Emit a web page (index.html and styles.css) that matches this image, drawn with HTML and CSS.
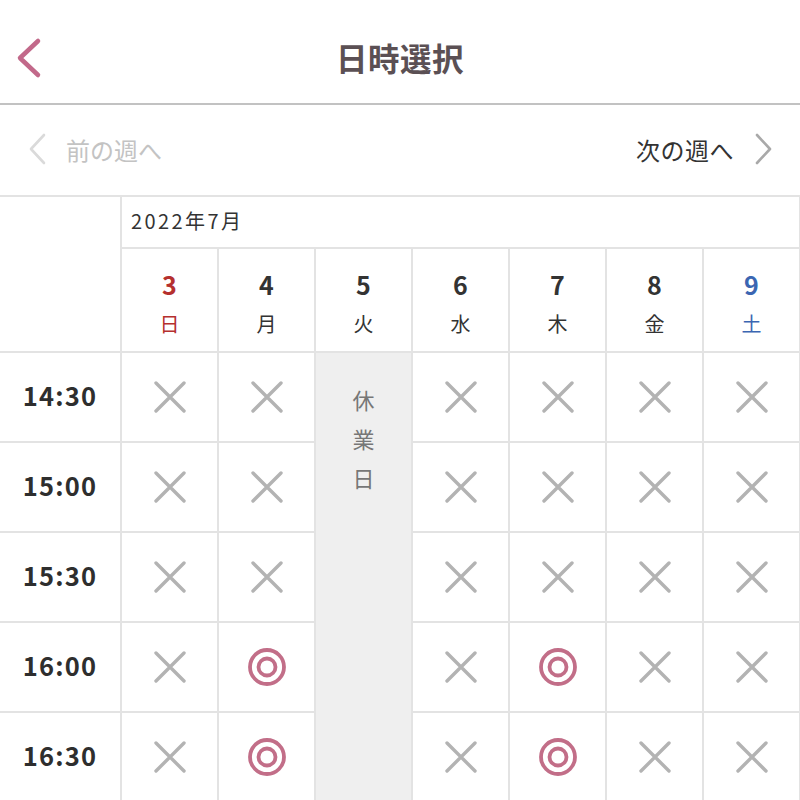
FILE: index.html
```html
<!DOCTYPE html>
<html lang="ja">
<head>
<meta charset="utf-8">
<title>日時選択</title>
<link rel="stylesheet" href="styles.css">
</head>
<body>
<header class="topbar">
  <div class="back">
    <svg width="28" height="42" viewBox="0 0 28 42"><polyline points="23,4 5,21 23,38" fill="none" stroke="#c2698a" stroke-width="4.5" stroke-linecap="round" stroke-linejoin="round"/></svg>
  </div>
  <h1 class="title">日時選択</h1>
  <div></div>
</header>
<nav class="weeknav">
  <div class="prev">
    <svg width="20" height="32" viewBox="0 0 20 32"><polyline points="17,2 4,16 17,30" fill="none" stroke="#dadada" stroke-width="2.6" stroke-linecap="round" stroke-linejoin="round"/></svg>
    <span>前の週へ</span>
  </div>
  <div class="next">
    <span>次の週へ</span>
    <svg width="20" height="32" viewBox="0 0 20 32"><polyline points="3,2 16,16 3,30" fill="none" stroke="#a9a9a9" stroke-width="2.6" stroke-linecap="round" stroke-linejoin="round"/></svg>
  </div>
</nav>
<div class="cal">
  <div class="corner"></div>
  <div class="month">2022年7月</div>
  <div class="holiday"><span>休業日</span></div>

  <div class="day sun"><b>3</b><span>日</span></div>
  <div class="day"><b>4</b><span>月</span></div>
  <div class="day"><b>5</b><span>火</span></div>
  <div class="day"><b>6</b><span>水</span></div>
  <div class="day"><b>7</b><span>木</span></div>
  <div class="day"><b>8</b><span>金</span></div>
  <div class="day sat"><b>9</b><span>土</span></div>

  <div class="time">14:30</div>
  <div class="cell x"><svg viewBox="0 0 32 32"><path d="M2 2L30 30M30 2L2 30"/></svg></div>
  <div class="cell x"><svg viewBox="0 0 32 32"><path d="M2 2L30 30M30 2L2 30"/></svg></div>
  <div class="cell x"><svg viewBox="0 0 32 32"><path d="M2 2L30 30M30 2L2 30"/></svg></div>
  <div class="cell x"><svg viewBox="0 0 32 32"><path d="M2 2L30 30M30 2L2 30"/></svg></div>
  <div class="cell x"><svg viewBox="0 0 32 32"><path d="M2 2L30 30M30 2L2 30"/></svg></div>
  <div class="cell x"><svg viewBox="0 0 32 32"><path d="M2 2L30 30M30 2L2 30"/></svg></div>

  <div class="time">15:00</div>
  <div class="cell x"><svg viewBox="0 0 32 32"><path d="M2 2L30 30M30 2L2 30"/></svg></div>
  <div class="cell x"><svg viewBox="0 0 32 32"><path d="M2 2L30 30M30 2L2 30"/></svg></div>
  <div class="cell x"><svg viewBox="0 0 32 32"><path d="M2 2L30 30M30 2L2 30"/></svg></div>
  <div class="cell x"><svg viewBox="0 0 32 32"><path d="M2 2L30 30M30 2L2 30"/></svg></div>
  <div class="cell x"><svg viewBox="0 0 32 32"><path d="M2 2L30 30M30 2L2 30"/></svg></div>
  <div class="cell x"><svg viewBox="0 0 32 32"><path d="M2 2L30 30M30 2L2 30"/></svg></div>

  <div class="time">15:30</div>
  <div class="cell x"><svg viewBox="0 0 32 32"><path d="M2 2L30 30M30 2L2 30"/></svg></div>
  <div class="cell x"><svg viewBox="0 0 32 32"><path d="M2 2L30 30M30 2L2 30"/></svg></div>
  <div class="cell x"><svg viewBox="0 0 32 32"><path d="M2 2L30 30M30 2L2 30"/></svg></div>
  <div class="cell x"><svg viewBox="0 0 32 32"><path d="M2 2L30 30M30 2L2 30"/></svg></div>
  <div class="cell x"><svg viewBox="0 0 32 32"><path d="M2 2L30 30M30 2L2 30"/></svg></div>
  <div class="cell x"><svg viewBox="0 0 32 32"><path d="M2 2L30 30M30 2L2 30"/></svg></div>

  <div class="time">16:00</div>
  <div class="cell x"><svg viewBox="0 0 32 32"><path d="M2 2L30 30M30 2L2 30"/></svg></div>
  <div class="cell o"><svg viewBox="0 0 38 38"><circle cx="19" cy="19" r="17"/><circle cx="19" cy="19" r="8.5"/></svg></div>
  <div class="cell x"><svg viewBox="0 0 32 32"><path d="M2 2L30 30M30 2L2 30"/></svg></div>
  <div class="cell o"><svg viewBox="0 0 38 38"><circle cx="19" cy="19" r="17"/><circle cx="19" cy="19" r="8.5"/></svg></div>
  <div class="cell x"><svg viewBox="0 0 32 32"><path d="M2 2L30 30M30 2L2 30"/></svg></div>
  <div class="cell x"><svg viewBox="0 0 32 32"><path d="M2 2L30 30M30 2L2 30"/></svg></div>

  <div class="time">16:30</div>
  <div class="cell x"><svg viewBox="0 0 32 32"><path d="M2 2L30 30M30 2L2 30"/></svg></div>
  <div class="cell o"><svg viewBox="0 0 38 38"><circle cx="19" cy="19" r="17"/><circle cx="19" cy="19" r="8.5"/></svg></div>
  <div class="cell x"><svg viewBox="0 0 32 32"><path d="M2 2L30 30M30 2L2 30"/></svg></div>
  <div class="cell o"><svg viewBox="0 0 38 38"><circle cx="19" cy="19" r="17"/><circle cx="19" cy="19" r="8.5"/></svg></div>
  <div class="cell x"><svg viewBox="0 0 32 32"><path d="M2 2L30 30M30 2L2 30"/></svg></div>
  <div class="cell x"><svg viewBox="0 0 32 32"><path d="M2 2L30 30M30 2L2 30"/></svg></div>
</div>
</body>
</html>
```

FILE: styles.css
```css
* { box-sizing: border-box; }
html, body {
  margin: 0;
  padding: 0;
  background: #ffffff;
  font-family: "Noto Sans CJK JP", "Noto Sans", sans-serif;
  color: #333333;
  overflow: hidden;
  width: 800px;
  height: 800px;
}

.topbar {
  height: 105px;
  padding-top: 12px;
  border-bottom: 2px solid #c2c2c2;
  display: grid;
  grid-template-columns: 1fr auto 1fr;
  align-items: center;
}
.back {
  padding-left: 15px;
  display: flex;
  align-items: center;
}
.back svg { display: block; }
.title {
  margin: 0;
  font-size: 31.5px;
  font-weight: 700;
  color: #5b5054;
  letter-spacing: 0.5px;
  line-height: 1;
}

.weeknav {
  height: 92px;
  border-bottom: 2px solid #e3e3e3;
  display: flex;
  align-items: center;
  justify-content: space-between;
  padding: 0 26px 2px 27px;
  font-size: 24px;
}
.weeknav svg { display: block; }
.prev, .next {
  display: flex;
  align-items: center;
}
.prev { color: #c3c3c3; gap: 19px; }
.next { color: #333333; gap: 20px; }
.next span { letter-spacing: 0.5px; }

.cal {
  display: grid;
  grid-template-columns: 122px repeat(7, 97px);
  grid-template-rows: 52px 104px repeat(5, 90px);
}
.cal > div {
  border-right: 2px solid #e3e3e3;
  border-bottom: 2px solid #e3e3e3;
}
.corner {
  grid-column: 1;
  grid-row: 1 / span 2;
}
.month {
  grid-column: 2 / span 7;
  grid-row: 1;
  font-size: 20px;
  letter-spacing: 2.4px;
  padding-left: 9px;
  padding-bottom: 3px;
  display: flex;
  align-items: center;
  color: #333333;
}
.cal > .holiday {
  grid-column: 4;
  grid-row: 3 / span 5;
  background: #efefef;
  border-bottom: none;
  display: flex;
  justify-content: center;
  padding-top: 37px;
}
.holiday span {
  writing-mode: vertical-rl;
  text-orientation: upright;
  font-size: 22px;
  letter-spacing: 17px;
  color: #777777;
}
.day {
  display: flex;
  flex-direction: column;
  align-items: center;
  padding-top: 18px;
  color: #333333;
}
.day b {
  font-size: 25px;
  font-weight: 700;
  line-height: 34px;
}
.day span {
  font-size: 20px;
  line-height: 26px;
  margin-top: 10px;
}
.day.sun { color: #b5302e; }
.day.sat { color: #3b66b2; }

.time {
  display: flex;
  align-items: center;
  justify-content: center;
  font-size: 25.5px;
  font-weight: 700;
  letter-spacing: 1.2px;
  color: #2e2e2e;
  padding-bottom: 5px;
}
.cell {
  display: flex;
  align-items: center;
  justify-content: center;
}
.cell.x svg {
  width: 32px;
  height: 32px;
  fill: none;
  stroke: #b3b3b3;
  stroke-width: 3.4;
  stroke-linecap: round;
}
.cell.o svg {
  width: 38px;
  height: 38px;
  fill: none;
  stroke: #c26e88;
  stroke-width: 3.8;
}
```
